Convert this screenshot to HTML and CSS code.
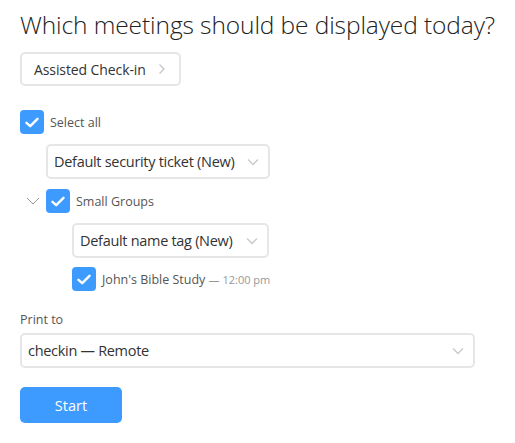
FILE: index.html
```html
<!DOCTYPE html>
<html>
<head>
<meta charset="utf-8">
<link rel="stylesheet" href="styles.css">
</head>
<body>
<div class="page">
  <h1 class="title">Which meetings should be displayed today?</h1>
  <button class="mode-btn"><span>Assisted Check-in</span>
    <svg class="chev-right" width="8" height="12" viewBox="0 0 8 12"><path d="M1.5 1.5 L6 6 L1.5 10.5" fill="none" stroke="#c4c4c4" stroke-width="1.3"/></svg>
  </button>

  <div class="tree">
    <div class="row">
      <span class="cb"><svg width="14" height="11" viewBox="0 0 14 11"><path d="M1.5 5.8 L5.2 9.2 L12.5 1.8" fill="none" stroke="#fff" stroke-width="2.4" stroke-linecap="round" stroke-linejoin="round"/></svg></span>
      <span class="label">Select all</span>
    </div>
    <div class="indent1">
      <div class="select sel-1">
        <span>Default security ticket (New)</span>
        <svg class="chev-down" width="12" height="8" viewBox="0 0 12 8"><path d="M1 1.5 L6 6.5 L11 1.5" fill="none" stroke="#c8c8c8" stroke-width="1.3"/></svg>
      </div>
    </div>
    <div class="row group-row">
      <svg class="toggle" width="14" height="8" viewBox="0 0 14 8"><path d="M1 1 L7 7 L13 1" fill="none" stroke="#9a9a9a" stroke-width="1"/></svg>
      <span class="cb"><svg width="14" height="11" viewBox="0 0 14 11"><path d="M1.5 5.8 L5.2 9.2 L12.5 1.8" fill="none" stroke="#fff" stroke-width="2.4" stroke-linecap="round" stroke-linejoin="round"/></svg></span>
      <span class="label">Small Groups</span>
    </div>
    <div class="indent2">
      <div class="select sel-2">
        <span>Default name tag (New)</span>
        <svg class="chev-down" width="12" height="8" viewBox="0 0 12 8"><path d="M1 1.5 L6 6.5 L11 1.5" fill="none" stroke="#c8c8c8" stroke-width="1.3"/></svg>
      </div>
      <div class="row meeting-row">
        <span class="cb"><svg width="14" height="11" viewBox="0 0 14 11"><path d="M1.5 5.8 L5.2 9.2 L12.5 1.8" fill="none" stroke="#fff" stroke-width="2.4" stroke-linecap="round" stroke-linejoin="round"/></svg></span>
        <span class="label">John's Bible Study <span class="time">— 12:00 pm</span></span>
      </div>
    </div>
  </div>

  <div class="print">
    <div class="print-label">Print to</div>
    <div class="select sel-3">
      <span>checkin — Remote</span>
      <svg class="chev-down" width="12" height="8" viewBox="0 0 12 8"><path d="M1 1.5 L6 6.5 L11 1.5" fill="none" stroke="#c8c8c8" stroke-width="1.3"/></svg>
    </div>
  </div>

  <button class="start">Start</button>
</div>
</body>
</html>
```
FILE: styles.css
```css
* { box-sizing: border-box; }
html, body { margin: 0; padding: 0; background: #fff; }
body { font-family: "Open Sans", "Noto Sans", sans-serif; color: #333; }
.page { padding: 8px 20px 0 20px; display: flex; flex-direction: column; align-items: flex-start; }
.title { margin: 0; font-weight: 300; font-size: 24.5px; line-height: 34px; color: #222; letter-spacing: -0.1px; white-space: nowrap; }
.mode-btn {
  margin-top: 10px;
  height: 34px; width: 161px;
  border: 2px solid #e6e6e6; border-radius: 5px; background: #fff;
  font-family: inherit; font-size: 14px; color: #333; letter-spacing: -0.1px;
  display: flex; align-items: center; gap: 12px;
  padding: 0 10px 0 12px;
}
.chev-right { display: block; }
.tree { margin-top: 24px; display: flex; flex-direction: column; }
.row { display: flex; align-items: center; height: 24px; }
.cb { width: 24px; height: 24px; border-radius: 4px; background: #3d9bff; display: flex; align-items: center; justify-content: center; flex: none; }
.label { margin-left: 6px; font-size: 12.5px; color: #555; white-space: nowrap; }
.time { font-size: 11px; color: #999; }
.select {
  height: 35px; border: 2px solid #e6e6e6; border-radius: 5px; background: #fff;
  display: flex; align-items: center; justify-content: space-between;
  padding: 0 9px 0 6px; font-size: 14.5px; letter-spacing: -0.3px; color: #333; white-space: nowrap;
}
.chev-down { display: block; flex: none; }
.indent1 { padding-left: 26px; margin-top: 10px; }
.sel-1 { width: 224px; }
.group-row { margin-top: 10px; }
.toggle { width: 14px; margin: 0 6px 0 6px; }
.indent2 { padding-left: 52px; margin-top: 10px; display: flex; flex-direction: column; }
.sel-2 { width: 197px; }
.meeting-row { margin-top: 9px; }
.print { margin-top: 20px; display: flex; flex-direction: column; }
.print-label { font-size: 12.5px; color: #555; line-height: 18px; }
.sel-3 { width: 455px; margin-top: 4px; }
.start {
  margin-top: 19px; width: 102px; height: 36px; border: none; border-radius: 5px;
  background: #3d9bff; color: #fff; font-family: inherit; font-size: 14.5px;
}
```
